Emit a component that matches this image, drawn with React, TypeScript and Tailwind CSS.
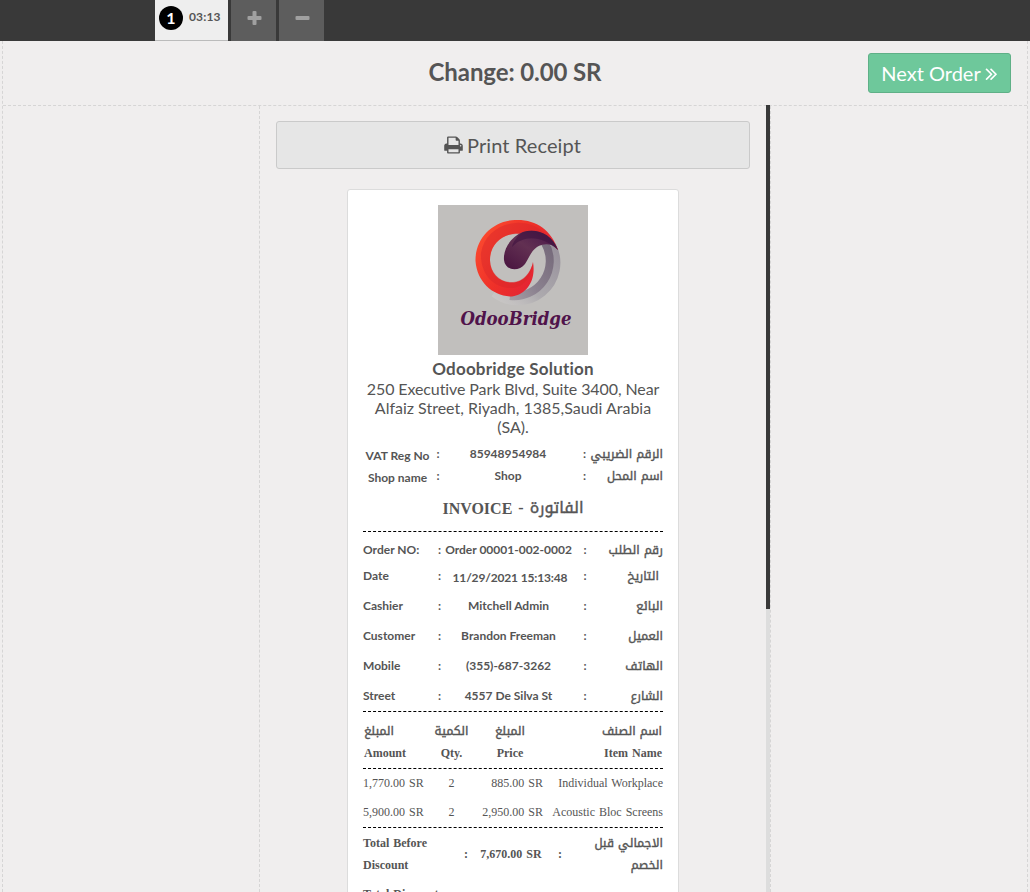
import React from "react";

function Logo() {
  return (
    <svg width="150" height="150" viewBox="0 0 150 150" className="mx-auto block">
      <defs>
        <linearGradient id="red" x1="0" y1="0" x2="1" y2="0.6">
          <stop offset="0" stopColor="#ff5030" />
          <stop offset="0.55" stopColor="#ee3029" />
          <stop offset="1" stopColor="#e02038" />
        </linearGradient>
        <linearGradient id="gray" x1="1" y1="0" x2="0" y2="1">
          <stop offset="0" stopColor="#75697a" />
          <stop offset="0.6" stopColor="#8b818f" />
          <stop offset="1" stopColor="#a39ca4" />
        </linearGradient>
        <linearGradient id="haze" x1="1" y1="0" x2="0" y2="1">
          <stop offset="0" stopColor="#97909b" />
          <stop offset="0.6" stopColor="#adaaae" />
          <stop offset="1" stopColor="#d0cecd" stopOpacity="0.5" />
        </linearGradient>
        <linearGradient id="plum" x1="0" y1="1" x2="1" y2="0">
          <stop offset="0" stopColor="#48133f" />
          <stop offset="0.5" stopColor="#623052" />
          <stop offset="1" stopColor="#461449" />
        </linearGradient>
      </defs>
      <rect width="150" height="150" fill="#c1bfbd" />
      <path d="M114 40A38.5 38.5 0 0 1 56 88" fill="none" stroke="url(#haze)" strokeWidth="8" />
      <path d="M107 38A35.5 35.5 0 0 1 72 91" fill="none" stroke="url(#gray)" strokeWidth="8" />
      <path d="M120 45C113 24 97 14 77 15C54 16 37 34 37.5 56C39 77 55 91.500 74 91.500C90 89 98 74 95 57C93 67 86 77.500 74 77.500C61 77.500 52 68 52 55C52 40 64 28.500 80 28.500L107 33Z" fill="url(#red)" />
      <path d="M43 48C46 31 59 20 77 18C96 16 110 28 119 43L107 33L80 29C63 28 51 41 52 56C53 69 63 78 75 77C85 77 93 67 95 57C94 72 86 82 74 83C57 84 42 70 43 48Z" fill="#d8252a" opacity="0.45" />
      <path d="M120 45C114 29 99 23 85 27C74 31 65 43 66 55C67 66 81 67 87 59C91 53 93 46 99 42C106 38 114 38 120 45Z" fill="url(#plum)" />
      <path d="M120 45C114 29 99 23 85 27C79 31 75 37 74 42C86 29 105 31 120 45Z" fill="#3d123f" opacity="0.6" />
      <text x="22.5" y="119.5" textLength="111" lengthAdjust="spacingAndGlyphs" fontSize="18" fontWeight="700" fontStyle="italic" fill="#50134b" className="font-['DejaVu_Serif_Condensed','DejaVu_Serif',serif]">
        OdooBridge
      </text>
    </svg>
  );
}

function PrintIcon() {
  return (
    <svg width="19" height="20" viewBox="0 0 1664 1792" fill="currentColor" className="mr-1">
      <path d="M384 1536h896v-256h-896v256zm0-640h896v-384h-160q-40 0-68-28t-28-68v-160h-640v640zm1152 64q0-26-19-45t-45-19-45 19-19 45 19 45 45 19 45-19 19-45zm128 0v416q0 13-9.5 22.5t-22.5 9.5h-224v160q0 40-28 68t-68 28h-960q-40 0-68-28t-28-68v-160h-224q-13 0-22.5-9.5t-9.5-22.5v-416q0-79 56.5-135.5t135.5-56.5h64v-544q0-40 28-68t68-28h672q40 0 88 20t76 48l152 152q28 28 48 76t20 88v256h64q79 0 135.5 56.5t56.5 135.5z" />
    </svg>
  );
}

function NextIcon() {
  return (
    <svg width="13" height="21" viewBox="0 0 1024 1792" fill="currentColor" className="ml-1">
      <path d="M595 960q0 13-10 23l-466 466q-10 10-23 10t-23-10l-50-50q-10-10-10-23t10-23l393-393-393-393q-10-10-10-23t10-23l50-50q10-10 23-10t23 10l466 466q10 10 10 23zm384 0q0 13-10 23l-466 466q-10 10-23 10t-23-10l-50-50q-10-10-10-23t10-23l393-393-393-393q-10-10-10-23t10-23l50-50q10-10 23-10t23 10l466 466q10 10 10 23z" />
    </svg>
  );
}

function TopBar() {
  return (
    <header className="flex h-[41px] bg-[#393939] pl-[155px]">
      <div className="flex h-[41px] w-[73px] items-start border-b border-[#bbb] bg-[#eee] pl-1 pt-1.5 font-bold">
        <span className="flex size-6 items-center justify-center rounded-full bg-black text-base text-white">1</span>
        <span className="ml-1.5 pt-0.5 text-xs leading-[18px] tracking-[0.15px]">03:13</span>
      </div>
      <div className="ml-[3px] flex w-[45px] justify-center bg-[#5d5d5d] pl-px pt-2.5 text-[#a0a0a0]">
        <svg width="15" height="15" viewBox="0 0 15 15" fill="currentColor">
          <rect x="0.5" y="6" width="14" height="4" rx="1" />
          <rect x="5.5" y="1" width="4" height="14" rx="1" />
        </svg>
      </div>
      <div className="ml-[3px] flex w-[45px] justify-center bg-[#5d5d5d] pl-px pt-2.5 text-[#a0a0a0]">
        <svg width="15" height="15" viewBox="0 0 15 15" fill="currentColor">
          <rect x="0.5" y="6" width="14" height="4" rx="1" />
        </svg>
      </div>
    </header>
  );
}

function Arabic({ children, className = "text-xs" }: { children: React.ReactNode; className?: string }) {
  return (
    <span dir="rtl" className={`font-['Noto_Kufi_Arabic','Cairo','Lato',sans-serif] font-normal leading-none [-webkit-text-stroke:0.4px_#555] [word-spacing:0px] ${className}`}>
      {children}
    </span>
  );
}

interface DetailProps {
  label: string;
  value: string;
  ar: string;
  size: string;
  valueStyle?: string;
  arStyle?: string;
}

function Detail({ label, value, ar, size, valueStyle = "", arStyle = "" }: DetailProps) {
  return (
    <div className={`flex items-center whitespace-nowrap ${size}`}>
      <span className="w-[75px]">{label}</span>
      <span className="w-1">:</span>
      <span className={`w-[133px] text-center ${valueStyle}`}>{value}</span>
      <span className="w-5 text-center">:</span>
      <span className={`flex-1 text-right ${arStyle}`}>
        <Arabic>{ar}</Arabic>
      </span>
    </div>
  );
}

function Dashes() {
  return <div className="h-0 border-t border-dashed border-black" />;
}

function Line({ amount, qty, price, name }: { amount: string; qty: string; price: string; name: string }) {
  return (
    <div className="flex h-[29px] items-center whitespace-nowrap pb-0.5">
      <span className="w-[63px]">{amount}</span>
      <span className="w-[51px] text-center">{qty}</span>
      <span className="w-[66px] text-right">{price}</span>
      <span className="flex-1 text-right">{name}</span>
    </div>
  );
}

function Receipt() {
  return (
    <article className="mx-auto mt-5 w-[332px] rounded-[3px] border border-[#dcdcdc] bg-white px-[15px] pt-[15px]">
      <Logo />
      <h2 className="mt-[3px] text-center text-[17px] font-bold leading-[22px] tracking-[0.2px]">Odoobridge Solution</h2>
      <p className="-mt-px text-center text-base leading-[19px]">
        <span className="tracking-[-0.1px]">250 Executive Park Blvd, Suite 3400, Near</span>
        <br />
        Alfaiz Street, Riyadh, 1385,Saudi Arabia
        <br />
        (SA).
      </p>

      <section className="mt-[7px] text-xs font-bold">
        {[
          ["VAT Reg No", "85948954984", "الرقم الضريبي"],
          ["Shop name", "Shop", "اسم المحل"],
        ].map(([label, value, ar]) => (
          <div key={label} className="flex h-[22px] items-center whitespace-nowrap">
            <span className="w-[69px] pt-1 text-center">{label}</span>
            <span className="w-3 text-center">:</span>
            <span className="w-32 text-center">{value}</span>
            <span className="w-[14px] text-right">:</span>
            <span className="flex-1 text-right">
              <Arabic>{ar}</Arabic>
            </span>
          </div>
        ))}
      </section>

      <h3 className="mt-[7px] flex h-[27px] items-center justify-center font-['Liberation_Serif',serif] text-base font-bold">
        <span className="pt-0.5">INVOICE</span>
        <span className="mx-[6px]">-</span>
        <Arabic className="text-base">الفاتورة</Arabic>
      </h3>
      <div className="h-[10px]" />
      <Dashes />

      <section className="pt-1 text-xs font-bold">
        <Detail label="Order NO:" value="Order 00001-002-0002" ar="رقم الطلب" size="h-7" />
        <Detail
          label="Date"
          value="11/29/2021 15:13:48"
          ar="التاريخ"
          size="h-[27px] pb-[3px]"
          valueStyle="pl-[3px] pt-1 tracking-[-0.15px]"
          arStyle="pr-1"
        />
        <Detail label="Cashier" value="Mitchell Admin" ar="البائع" size="h-[30px]" />
        <Detail label="Customer" value="Brandon Freeman" ar="العميل" size="h-[30px]" />
        <Detail label="Mobile" value="(355)-687-3262" ar="الهاتف" size="h-[30px]" />
        <Detail label="Street" value="4557 De Silva St" ar="الشارع" size="h-[30px]" />
      </section>
      <Dashes />

      <section className="font-['Liberation_Serif',serif] text-xs [word-spacing:1px]">
        <div className="flex h-14 px-px pt-2 font-bold leading-[22px]">
          <div className="w-[62px]">
            <div className="h-[22px]"><Arabic>المبلغ</Arabic></div>
            <div>Amount</div>
          </div>
          <div className="w-[51px] text-center">
            <div className="h-[22px]"><Arabic>الكمية</Arabic></div>
            <div>Qty.</div>
          </div>
          <div className="w-[66px] text-center">
            <div className="h-[22px]"><Arabic>المبلغ</Arabic></div>
            <div>Price</div>
          </div>
          <div className="flex-1 text-right">
            <div className="h-[22px]"><Arabic>اسم الصنف</Arabic></div>
            <div>Item Name</div>
          </div>
        </div>
        <Dashes />
        <Line amount="1,770.00 SR" qty="2" price="885.00 SR" name="Individual Workplace" />
        <Line amount="5,900.00 SR" qty="2" price="2,950.00 SR" name="Acoustic Bloc Screens" />
        <Dashes />
        <div className="flex h-[52px] items-center font-bold leading-[22px]">
          <div className="w-[98px]">
            Total Before
            <br />
            Discount
          </div>
          <div className="w-[10px] text-center">:</div>
          <div className="w-[80px] text-center">7,670.00 SR</div>
          <div className="w-[18px] text-center">:</div>
          <div className="flex-1 text-right">
            <div className="h-[22px]"><Arabic>الاجمالي قبل</Arabic></div>
            <div className="h-[22px]"><Arabic>الخصم</Arabic></div>
          </div>
        </div>
        <div className="pt-[3px] font-bold leading-[22px]">Total Discount</div>
      </section>
    </article>
  );
}

export default function App() {
  return (
    <div className="flex h-[892px] w-[1030px] flex-col overflow-hidden bg-[#f0eeee] font-[Lato] text-[#555] [font-variant-ligatures:no-common-ligatures]">
      <TopBar />
      <main className="mx-[2px] flex min-h-0 flex-1 flex-col border-x border-dashed border-[#d6d5d5]">
        <div className="grid h-[65px] shrink-0 grid-cols-[1fr_auto_1fr] border-b border-dashed border-[#d6d5d5]">
          <span />
          <h1 className="pt-[13px] text-2xl font-bold leading-9 tracking-[-0.1px]">Change: 0.00 SR</h1>
          <button className="mr-4 mt-3 flex h-10 w-[143px] items-center justify-center justify-self-end rounded-[3px] border border-[#5fb087] bg-[#6ec89b] text-xl text-white">
            Next Order <NextIcon />
          </button>
        </div>
        <div className="-mt-px flex min-h-0 flex-1">
          <div className="mt-px w-[257px] border-r border-dashed border-[#d6d5d5]" />
          <div className="mt-px h-full w-[506px] overflow-hidden px-4 pt-[15px]">
            <button className="flex h-12 w-full items-center justify-center rounded-[3px] border border-[#cacaca] bg-[#e6e6e6] pr-px text-xl tracking-[0.1px]">
              <PrintIcon /> Print Receipt
            </button>
            <Receipt />
          </div>
          <div className="w-1 bg-[#dddddd]">
            <div className="h-[504px] bg-[#393939]" />
          </div>
          <div className="mt-px border-l border-dashed border-[#d6d5d5]" />
        </div>
      </main>
    </div>
  );
}
